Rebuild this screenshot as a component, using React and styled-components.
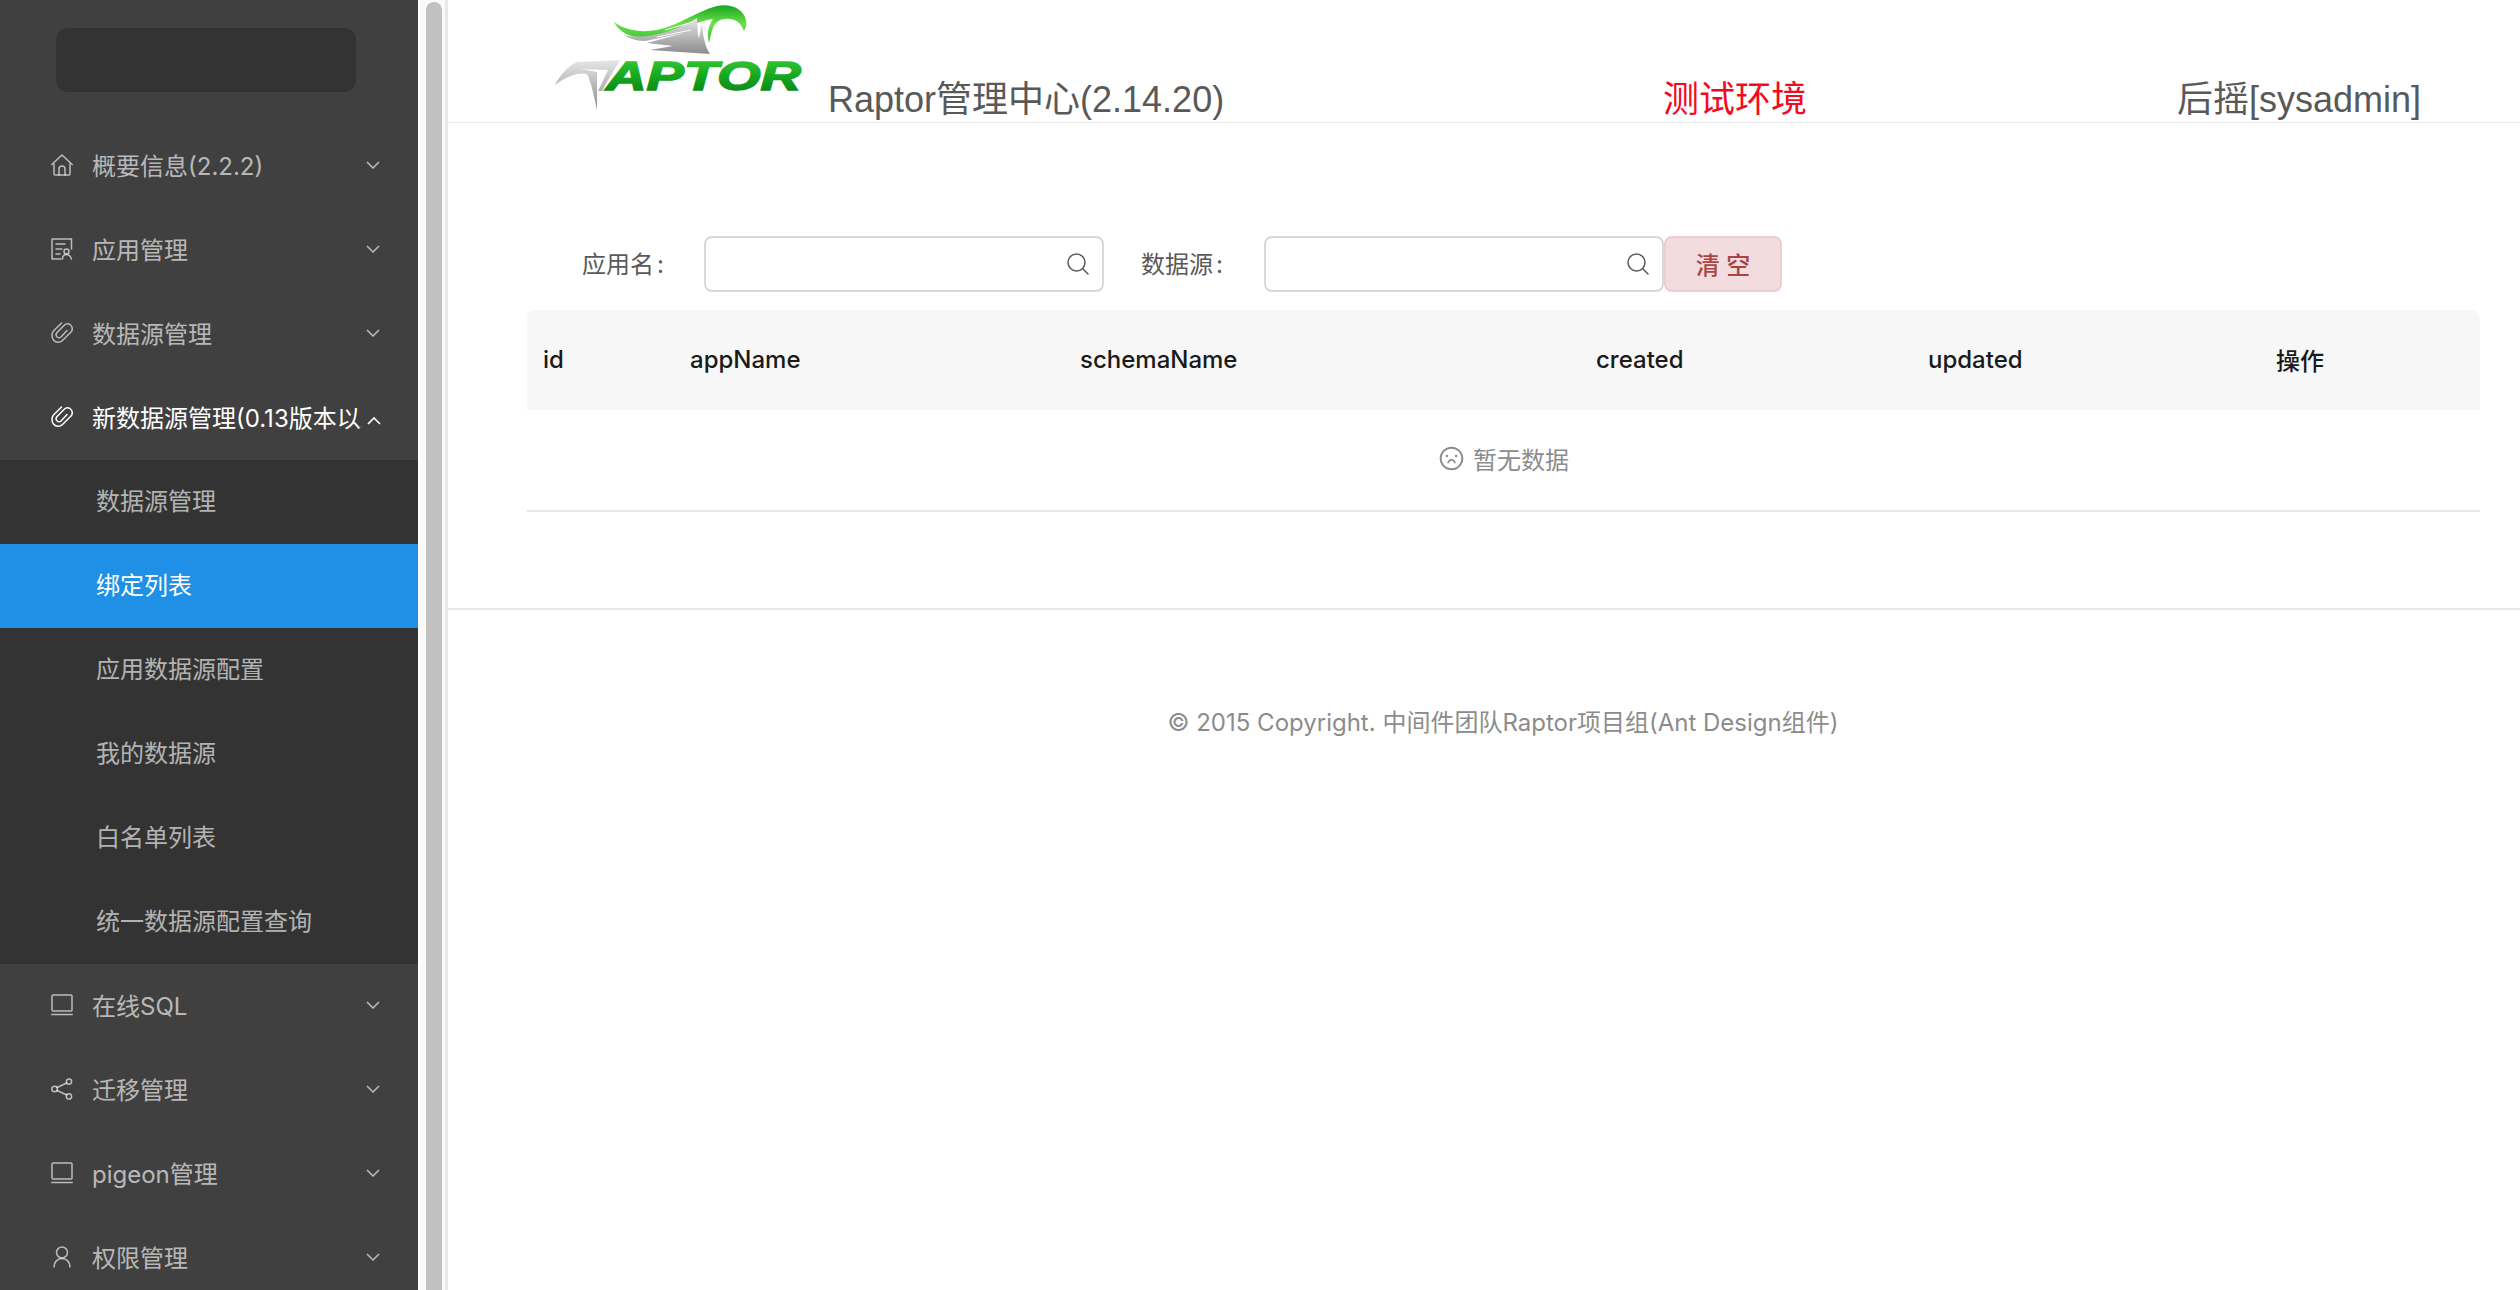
import React from "react";
import styled, { createGlobalStyle } from "styled-components";
import { AiOutlineFrown } from "react-icons/ai";

const Global = createGlobalStyle`
  html, body { margin: 0; padding: 0; height: 100%; overflow: hidden; background: #fff; }
  body { font-family: Inter, "Noto Sans CJK SC", sans-serif; }
  * { box-sizing: border-box; }
`;

const Glyph = ({ children }) => (
  <svg width="22" height="22" viewBox="0 0 22 22" fill="none" stroke="currentColor" strokeWidth="1.5" strokeLinecap="round" strokeLinejoin="round">
    {children}
  </svg>
);

const HomeIcon = () => (
  <Glyph>
    <path d="M0.8 10.5 L11 1 L21.2 10.5" />
    <path d="M3 10 V20 a1 1 0 0 0 1 1 H18 a1 1 0 0 0 1 -1 V10" />
    <path d="M8 21 V15 a3 3 0 0 1 6 0 V21" />
  </Glyph>
);

const SolutionIcon = () => (
  <Glyph>
    <path d="M20.5 11 V1 H1 V21 H10" />
    <path d="M5 6 H14 M5 11 H11 M5 16 H9" />
    <circle cx="15.5" cy="13.5" r="2.5" />
    <path d="M11.5 21 C11.5 18 13.5 16.5 15.5 16.5 C17.5 16.5 19.5 18 20.5 21" />
  </Glyph>
);

const ClipIcon = () => (
  <Glyph>
    <path d="M10.5 1 L2.5 9 C0.5 11.5 0.5 15.5 2.5 18 C5 21 9 21 11.5 18.5 L20 10 C22 8 21.5 4.5 19.5 3 C17.5 1.5 15 1.5 13 3.5 L6 10.5 C4.8 12 5 14 6.2 15 C7.5 16 9 15.8 10 15 L16 8.5" />
  </Glyph>
);

const LaptopIcon = () => (
  <Glyph>
    <rect x="1" y="1" width="20" height="16" rx="1" />
    <path d="M0.8 20.5 H21.2" />
  </Glyph>
);

const ShareIcon = () => (
  <Glyph>
    <circle cx="18" cy="3.6" r="2.6" />
    <circle cx="3.6" cy="11" r="2.8" />
    <circle cx="18" cy="18.4" r="2.6" />
    <path d="M15.8 5 L6 9.5 M6 12.5 L15.8 17" />
  </Glyph>
);

const UserIcon = () => (
  <Glyph>
    <circle cx="11" cy="6.5" r="5.5" />
    <path d="M3 21 C3 16 6.5 12.5 11 12.5 C15.5 12.5 19 16 19 21" />
  </Glyph>
);

const SearchIcon = () => (
  <svg width="22" height="22" viewBox="0 0 22 22" fill="none" stroke="currentColor" strokeWidth="1.5" strokeLinecap="round">
    <circle cx="9.5" cy="9.5" r="8.5" />
    <path d="M15.8 15.8 L21 21" />
  </svg>
);

const DownArrow = () => (
  <svg width="14" height="8" viewBox="0 0 14 8" fill="none" stroke="currentColor" strokeWidth="1.5">
    <path d="M1 1 L7 7 L13 1" />
  </svg>
);

const UpArrow = () => (
  <svg width="14" height="8" viewBox="0 0 14 8" fill="none" stroke="currentColor" strokeWidth="1.7">
    <path d="M1 7 L7 1 L13 7" />
  </svg>
);

const topMenu = [
  { icon: HomeIcon, label: "概要信息(2.2.2)" },
  { icon: SolutionIcon, label: "应用管理" },
  { icon: ClipIcon, label: "数据源管理" },
];
const subMenu = ["数据源管理", "绑定列表", "应用数据源配置", "我的数据源", "白名单列表", "统一数据源配置查询"];
const bottomMenu = [
  { icon: LaptopIcon, label: "在线SQL" },
  { icon: ShareIcon, label: "迁移管理" },
  { icon: LaptopIcon, label: "pigeon管理" },
  { icon: UserIcon, label: "权限管理" },
];
const columns = ["id", "appName", "schemaName", "created", "updated", "操作"];

const MenuRow = ({ icon: Icon, label, open }) => (
  <Item $open={open}>
    <ItemIcon>
      <Icon />
    </ItemIcon>
    <ItemLabel>{label}</ItemLabel>
    <Chevron $open={open}>{open ? <UpArrow /> : <DownArrow />}</Chevron>
  </Item>
);

const Logo = () => (
  <svg width="270" height="120" viewBox="0 0 270 120">
    <defs>
      <linearGradient id="greenText" x1="0" y1="0" x2="0" y2="1">
        <stop offset="0" stopColor="#3fd13a" />
        <stop offset="0.5" stopColor="#16a81f" />
        <stop offset="1" stopColor="#0a7a18" />
      </linearGradient>
      <linearGradient id="greenWing" x1="0" y1="0" x2="0" y2="1">
        <stop offset="0" stopColor="#17a51f" />
        <stop offset="0.5" stopColor="#6fe04e" />
        <stop offset="1" stopColor="#2fc02f" />
      </linearGradient>
      <linearGradient id="silver" x1="0" y1="0" x2="0" y2="1">
        <stop offset="0" stopColor="#e6e6e6" />
        <stop offset="1" stopColor="#8c8c8c" />
      </linearGradient>
    </defs>
    <path
      d="M69 22 C80 30 95 33 112 30 C135 25 152 11 172 6 C186 3 197 9 200 17 C202 22 202 26 199 31 C197 26 194 22 189 20 C180 17 171 20 168 28 C166 33 165 38 164 43 C162 34 163 26 168 19 C150 21 128 36 105 38 C88 39 74 33 69 22 Z"
      fill="url(#greenWing)"
    />
    <path
      d="M79 35 C100 40 130 32 152 18 C153 26 152 34 154 38 L157 24 C158 36 160 46 165 54 L105 50 L128 46 L102 43 L139 33 L100 41 C92 41 85 39 79 35 Z"
      fill="url(#silver)"
    />
    <path d="M120 30 L148 22 M112 37 L146 30" stroke="#ffffff" strokeWidth="1" fill="none" />
    <path
      d="M10 85 C15 75 23 66 32 62 L75 60 L62 82 L57 91 L53 91 L63 70 L36 69 L52 72 C52 78 52 90 52 110 C49 95 46 82 42 74 C34 72 22 76 10 85 Z"
      fill="url(#silver)"
    />
    <text
      x="61"
      y="90"
      fontFamily="Liberation Sans, sans-serif"
      fontWeight="700"
      fontStyle="italic"
      fontSize="41"
      textLength="195"
      lengthAdjust="spacingAndGlyphs"
      fill="url(#greenText)"
      stroke="url(#greenText)"
      strokeWidth="1.5"
    >
      APTOR
    </text>
  </svg>
);

export default function App() {
  return (
    <>
      <Global />
      <Page>
        <Sidebar>
          <Brand />
          <Menu>
            {topMenu.map((m) => (
              <MenuRow key={m.label} {...m} />
            ))}
            <MenuRow icon={ClipIcon} label="新数据源管理(0.13版本以上)" open />
            <SubList>
              {subMenu.map((s) => (
                <SubItem key={s} $active={s === "绑定列表"}>
                  {s}
                </SubItem>
              ))}
            </SubList>
            {bottomMenu.map((m) => (
              <MenuRow key={m.label} {...m} />
            ))}
          </Menu>
        </Sidebar>
        <Track>
          <Thumb />
        </Track>
        <Main>
          <Header>
            <LogoBox>
              <Logo />
            </LogoBox>
            <Title>Raptor管理中心(2.14.20)</Title>
            <EnvTag>测试环境</EnvTag>
            <UserName>后摇[sysadmin]</UserName>
          </Header>
          <Content>
            <FilterRow>
              <FilterLabel $width={178} $pad={55}>
                应用名<Colon>:</Colon>
              </FilterLabel>
              <SearchBox>
                <SearchIcon />
              </SearchBox>
              <FilterLabel $width={160} $pad={36}>
                数据源<Colon>:</Colon>
              </FilterLabel>
              <SearchBox>
                <SearchIcon />
              </SearchBox>
              <ClearButton>清 空</ClearButton>
            </FilterRow>
            <Table>
              <HeadRow>
                {columns.map((c) => (
                  <HeadCell key={c}>{c}</HeadCell>
                ))}
              </HeadRow>
              <EmptyRow>
                <AiOutlineFrown size={27} />
                <span>暂无数据</span>
              </EmptyRow>
            </Table>
          </Content>
          <Footer>© 2015 Copyright. 中间件团队Raptor项目组(Ant Design组件)</Footer>
        </Main>
      </Page>
    </>
  );
}

const Page = styled.div`
  display: flex;
  width: 2520px;
  height: 1290px;
  overflow: hidden;
`;

const Sidebar = styled.aside`
  width: 418px;
  flex: none;
  background: #404040;
  overflow: hidden;
`;

const Brand = styled.div`
  width: 300px;
  height: 64px;
  margin: 28px 0 32px 56px;
  background: #333333;
  border-radius: 12px;
`;

const Menu = styled.nav`
  display: flex;
  flex-direction: column;
`;

const Item = styled.div`
  display: flex;
  align-items: center;
  height: 84px;
  flex: none;
  padding: 0 0 3px 51px;
  font-size: 24px;
  color: ${(p) => (p.$open ? "#ffffff" : "rgba(255, 255, 255, 0.65)")};
`;

const ItemIcon = styled.span`
  display: flex;
  width: 41px;
  flex: none;
`;

const ItemLabel = styled.span`
  width: 270px;
  white-space: nowrap;
  overflow: hidden;
`;

const Chevron = styled.span`
  display: flex;
  margin-top: ${(p) => (p.$open ? 8 : 0)}px;
  margin-left: ${(p) => (p.$open ? 5 : 4)}px;
`;

const SubList = styled.div`
  display: flex;
  flex-direction: column;
  background: #333333;
`;

const SubItem = styled.div`
  height: 84px;
  line-height: 84px;
  padding-left: 96px;
  font-size: 24px;
  color: ${(p) => (p.$active ? "#ffffff" : "rgba(255, 255, 255, 0.65)")};
  background: ${(p) => (p.$active ? "#1f90e6" : "transparent")};
`;

const Track = styled.div`
  width: 28px;
  flex: none;
  margin-left: 2px;
  padding: 2px 0 0 6px;
  background: #fafafa;
  border-right: 3px solid #e8e8e8;
`;

const Thumb = styled.div`
  width: 16px;
  height: 1400px;
  background: #c1c1c1;
  border-radius: 8px;
`;

const Main = styled.main`
  flex: 1;
  min-width: 0;
  display: flex;
  flex-direction: column;
`;

const Header = styled.header`
  display: flex;
  align-items: flex-end;
  height: 123px;
  padding-left: 97px;
  border-bottom: 1px solid #e8e8e8;
  font-family: "Liberation Sans", "Noto Sans CJK SC", sans-serif;
  font-size: 36px;
  line-height: 44px;
  color: #595959;
`;

const LogoBox = styled.div`
  width: 283px;
  height: 122px;
  flex: none;
  align-self: flex-start;
`;

const Title = styled.div`
  width: 835px;
  flex: none;
`;

const EnvTag = styled.div`
  width: 514px;
  flex: none;
  color: #f5091f;
`;

const UserName = styled.div`
  white-space: nowrap;
`;

const Content = styled.section`
  height: 487px;
  flex: none;
  padding: 113px 0 0 78px;
  border-bottom: 2px solid #e8e8e8;
`;

const FilterRow = styled.div`
  display: flex;
  align-items: center;
  height: 56px;
  margin-bottom: 18px;
`;

const FilterLabel = styled.label`
  width: ${(p) => p.$width}px;
  padding: 0 0 4px ${(p) => p.$pad + 1}px;
  font-size: 24px;
  color: #595959;
  flex: none;
`;

const Colon = styled.span`
  margin-left: 3px;
`;

const SearchBox = styled.div`
  width: 400px;
  height: 56px;
  flex: none;
  display: flex;
  align-items: center;
  justify-content: flex-end;
  padding-right: 13px;
  border: 2px solid #d9d9d9;
  border-radius: 8px;
  background: #fff;
  color: #595959;
`;

const ClearButton = styled.button`
  width: 118px;
  height: 56px;
  flex: none;
  border: 2px solid #eccdd1;
  border-radius: 8px;
  background: #f2dcde;
  color: #a94442;
  font: inherit;
  font-size: 24px;
  font-weight: 500;
  padding: 0 0 2px;
`;

const Table = styled.div`
  width: 1953px;
  margin-left: 1px;
`;

const HeadRow = styled.div`
  display: grid;
  grid-template-columns: 147px 390px 516px 332px 348px 1fr;
  height: 100px;
  align-items: center;
  padding: 0 0 1px 16px;
  background: #f7f7f7;
  border-radius: 8px 8px 0 0;
`;

const HeadCell = styled.div`
  font-size: 24px;
  font-weight: 500;
  color: #1a1a1a;
`;

const EmptyRow = styled.div`
  display: flex;
  align-items: center;
  justify-content: center;
  gap: 8px;
  height: 102px;
  padding-bottom: 4px;
  border-bottom: 2px solid #e8e8e8;
  font-size: 24px;
  color: #8c8c8c;
`;

const Footer = styled.footer`
  padding: 96px 0 0 38px;
  text-align: center;
  font-size: 24px;
  line-height: 34px;
  color: #8c8c8c;
`;
